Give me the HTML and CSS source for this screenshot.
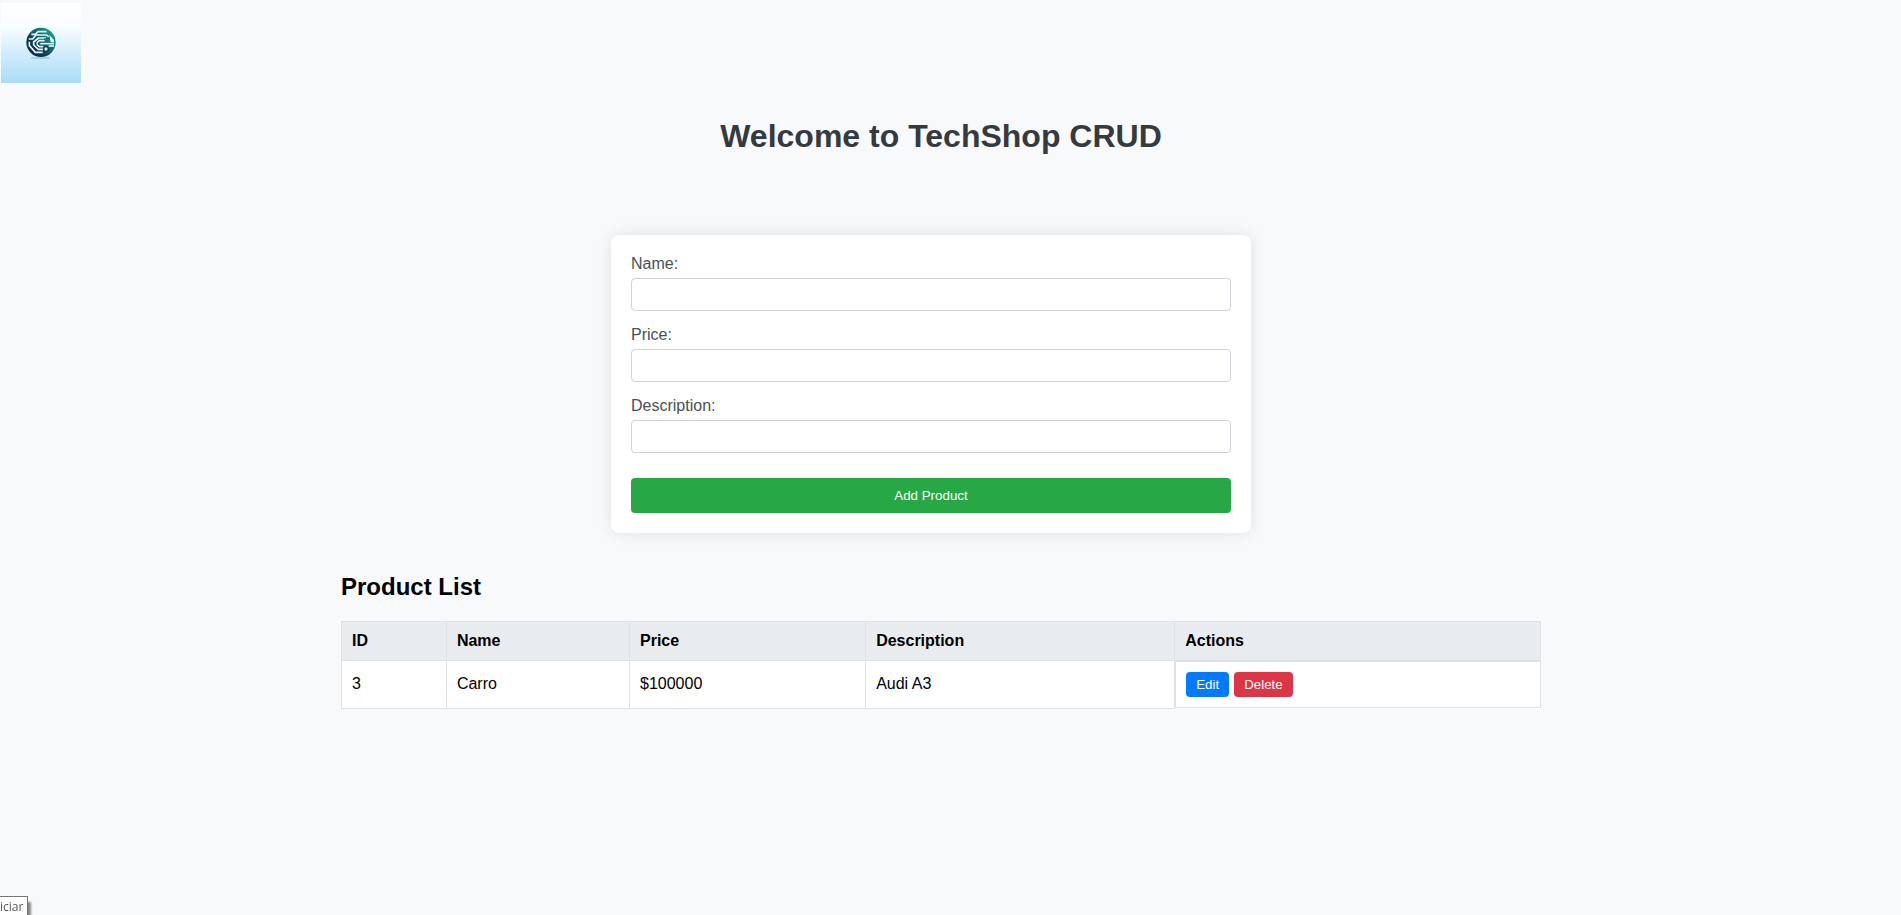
FILE: index.html
```html
<!DOCTYPE html>
<html lang="en">
<head>
<meta charset="utf-8">
<title>TechShop CRUD</title>
<link rel="stylesheet" href="styles.css">
</head>
<body>
<header class="site-header">
  <svg class="logo" viewBox="3 9 240 240" role="img" aria-label="TechShop">
    <defs>
      <linearGradient id="sky" x1="0" y1="0" x2="0" y2="1">
        <stop offset="0" stop-color="#ffffff"/>
        <stop offset="0.3" stop-color="#f8fdff"/>
        <stop offset="0.65" stop-color="#cfebfb"/>
        <stop offset="1" stop-color="#a9ddf5"/>
      </linearGradient>
      <linearGradient id="chip" gradientUnits="userSpaceOnUse" x1="156" y1="95" x2="98" y2="145">
        <stop offset="0" stop-color="#0ba08e"/>
        <stop offset="0.45" stop-color="#12696f"/>
        <stop offset="1" stop-color="#0c2c46"/>
      </linearGradient>
    </defs>
    <rect x="3" y="9" width="240" height="240" fill="url(#sky)"/>
    <rect x="93" y="171" width="56" height="6" rx="3" fill="#9ed3ea"/>
    <circle cx="123" cy="127" r="44" fill="url(#chip)"/>
    <g fill="none" stroke="#e4f5fc" stroke-width="5" stroke-linejoin="round">
      <path d="M94 103h12l8-8h26"/>
      <path d="M86 117h12l10-12h32l6 6"/>
      <path d="M88 125v12l18 20h22"/>
      <path d="M138 114h-22l-15 12v9l14 13h14"/>
      <path d="M134 122h-16l-6 6v6l6 6h12"/>
      <path d="M120 131h42"/>
      <path d="M146 138h16"/>
    </g>
    <path d="M148 104l14 16v7h-10z" fill="#e4f5fc"/>
    <path d="M132 117h12" stroke="#117b7c" stroke-width="4"/>
    <circle cx="145" cy="117" r="5" fill="#117b7c"/>
    <circle cx="117" cy="131" r="4" fill="#12606a"/>
    <circle cx="138" cy="147" r="7" fill="#d8f0fa" stroke="#0d3a50" stroke-width="4"/>
  </svg>
</header>
<main class="container">
  <h1 class="title">Welcome to TechShop CRUD</h1>
  <div class="form-area">
    <form class="product-form">
      <label for="name">Name:</label>
      <input type="text" id="name" name="name">
      <label for="price">Price:</label>
      <input type="text" id="price" name="price">
      <label for="description">Description:</label>
      <input type="text" id="description" name="description">
      <button type="submit" class="add">Add Product</button>
    </form>
  </div>
  <h2 class="subtitle">Product List</h2>
  <table class="products">
    <thead>
      <tr><th>ID</th><th>Name</th><th>Price</th><th>Description</th><th>Actions</th></tr>
    </thead>
    <tbody>
      <tr>
        <td>3</td><td>Carro</td><td>$100000</td><td>Audi A3</td>
        <td class="actions"><button type="button" class="edit">Edit</button><button type="button" class="delete">Delete</button></td>
      </tr>
    </tbody>
  </table>
</main>
<div class="tooltip">iciar</div>
</body>
</html>
```
FILE: styles.css
```css
body {
  margin: 0;
  padding-right: 19px;
  background: #f8f9fb;
  font-family: Arial, "Liberation Sans", sans-serif;
  font-size: 16px;
}

.site-header {
  padding: 3px 1px 0;
}

.logo {
  display: block;
  width: 80px;
  height: 80px;
}

.container {
  max-width: 1200px;
  margin: 0 auto;
}

.title {
  margin: 35px 0 81px;
  color: #343a40;
  font-size: 32px;
  line-height: 36px;
  text-align: center;
}

.form-area {
  padding-right: 20px;
}

.product-form {
  display: flex;
  flex-direction: column;
  max-width: 600px;
  margin: 0 auto;
  padding: 20px;
  border-radius: 8px;
  background: #fff;
  box-shadow: 0 0 15px rgba(0, 0, 0, 0.1);
}

.product-form label {
  margin-bottom: 5px;
  color: #495057;
  line-height: 18px;
}

.product-form input {
  margin: 0 0 15px;
  padding: 8px;
  border: 1px solid #ced4da;
  border-radius: 4px;
  line-height: 15px;
}

button {
  border: 0;
  border-radius: 4px;
  color: #fff;
  font-family: inherit;
  line-height: 15px;
  cursor: pointer;
}

.add {
  margin-top: 10px;
  padding: 10px;
  background: #28a745;
}

.subtitle {
  margin: 40px 0 20px;
  font-size: 24px;
  line-height: 28px;
}

.products {
  width: 100%;
  border-collapse: collapse;
  background: #fff;
}

.products th,
.products td {
  padding: 10px;
  border: 1px solid #dee2e6;
  line-height: 18px;
  text-align: left;
}

.products th {
  background: #e9ecef;
}

.products .actions {
  display: flex;
  gap: 5px;
}

.edit,
.delete {
  padding: 5px 10px;
}

.edit {
  background: #007bff;
}

.delete {
  background: #dc3545;
}

.tooltip {
  position: fixed;
  bottom: -2px;
  left: 0;
  padding-right: 4px;
  border: solid #767676;
  border-width: 1px 1px 1px 0;
  background: #fff;
  box-shadow: 3px 6px 2px rgba(0, 0, 0, 0.45);
  color: #575757;
  font-family: "Open Sans", sans-serif;
  font-size: 12px;
  line-height: 19px;
}
```
